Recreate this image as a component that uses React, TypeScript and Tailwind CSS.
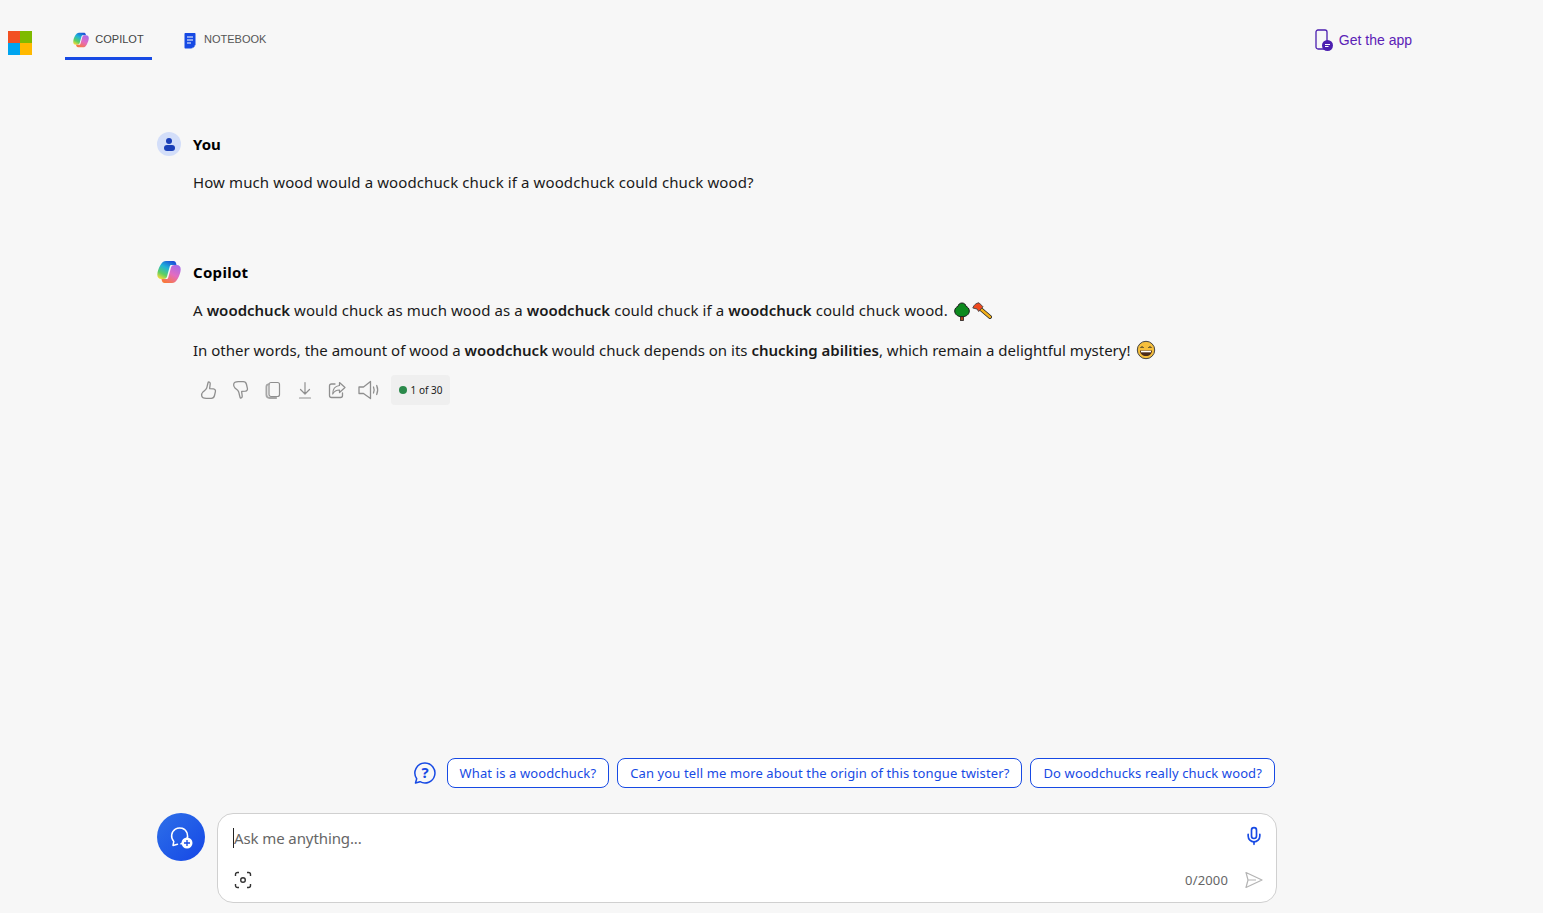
import { Mic } from "lucide-react";

const suggestions = [
  "What is a woodchuck?",
  "Can you tell me more about the origin of this tongue twister?",
  "Do woodchucks really chuck wood?",
];

function MsLogo() {
  return (
    <div className="grid grid-cols-2 gap-0 w-6 h-6">
      <div className="bg-[#f25022]" />
      <div className="bg-[#7fba00]" />
      <div className="bg-[#00a4ef]" />
      <div className="bg-[#ffb900]" />
    </div>
  );
}

function CopilotLogo({ id, size }: { id: string; size: number }) {
  return (
    <svg width={size} height={size} viewBox="0 0 24 24">
      <defs>
        <linearGradient id={`${id}a`} x1="0.75" y1="0" x2="0.2" y2="1">
          <stop offset="0" stopColor="#1b50d8" />
          <stop offset="0.4" stopColor="#1fb4d8" />
          <stop offset="0.75" stopColor="#5fcf60" />
          <stop offset="1" stopColor="#f2d93a" />
        </linearGradient>
        <linearGradient id={`${id}b`} x1="0.8" y1="0" x2="0.25" y2="1">
          <stop offset="0" stopColor="#a86be8" />
          <stop offset="0.5" stopColor="#e36cc0" />
          <stop offset="1" stopColor="#f9783a" />
        </linearGradient>
      </defs>
      <path d="M9 1h7.500c1.300 0 2.100.8 2.600 2.200l.4 1.800h-5c-.9 0-1.400.4-1.700 1.300L10 16.500c-.6 1.800-1.800 2.500-3.500 2.500H4.200C1.800 19 .2 17.300.3 14.500c.1-2.800 1.300-6.200 3-9.200C4.800 2.500 6.700 1 9 1z" fill={`url(#${id}a)`} />
      <path d="M15 23H7.500c-1.300 0-2.100-.8-2.600-2.200L4.500 19h5c.9 0 1.400-.4 1.700-1.300L14 7.500C14.600 5.700 15.800 5 17.500 5h2.300c2.400 0 4 1.700 3.900 4.500-.1 2.800-1.300 6.200-3 9.200C19.200 21.500 17.300 23 15 23z" fill={`url(#${id}b)`} />
    </svg>
  );
}

function TreeEmoji() {
  return (
    <svg width="18" height="19" viewBox="0 0 18 19" className="inline-block align-[-5px] ml-[1px]">
      <rect x="7.500" y="13" width="3" height="5.500" fill="#b0481c" stroke="#222" strokeWidth="0.8" />
      <path d="M9 1c2.300 0 3.800 1.600 3.900 3.300 1.900.7 3.400 2.300 3.400 4.700 0 3.200-2.800 5.700-7.300 5.700S1.700 12.200 1.700 9c0-2.400 1.500-4 3.400-4.700C5.200 2.600 6.700 1 9 1z" fill="#0d8a1e" stroke="#1c1c1c" strokeWidth="1" />
    </svg>
  );
}

function AxeEmoji() {
  return (
    <svg width="20" height="17" viewBox="0 0 20 17" className="inline-block align-[-3px] -ml-[3px]">
      <path d="M7.500 6l10.500 9" stroke="#222" strokeWidth="3.800" strokeLinecap="round" />
      <path d="M7.500 6l10.500 9" stroke="#f2b01a" strokeWidth="2.400" strokeLinecap="round" />
      <path d="M.8 6C1.700 3.200 4 1 7 .8l4 4-4.300 4.700L5 7z" fill="#f0491f" stroke="#444" strokeWidth="0.9" strokeLinejoin="round" />
    </svg>
  );
}

function GrinEmoji() {
  return (
    <svg width="20" height="20" viewBox="0 0 20 20" className="inline-block align-[-4px] ml-[2px]">
      <circle cx="10" cy="10" r="8.700" fill="#f6bf3c" stroke="#444" strokeWidth="1" />
      <path d="M4.500 8c.6-1.500 2.500-1.500 3.100 0M12.400 8c.6-1.500 2.500-1.500 3.100 0" fill="none" stroke="#222" strokeWidth="1" />
      <path d="M4 10.500h12c0 3.500-2.600 5.500-6 5.500s-6-2-6-5.500z" fill="#4a2a1a" />
      <path d="M5 10.800h10v1.500H5z" fill="#fff" />
    </svg>
  );
}

const grey = "#8f8f8f";

function ThumbUp({ flip }: { flip?: boolean }) {
  return (
    <svg width="20" height="20" viewBox="0 0 20 20" fill="none" className={flip ? "-scale-y-100" : ""}>
      <path d="M9.200 2.200c1-.5 2 .2 2 1.400 0 1.800-.6 3.400-.5 5l3.700.3c1.700.2 2.300 1.500 2 2.800l-.9 3.800c-.4 1.700-1.500 2.800-3.200 2.800H7.200c-2.300 0-4.200-.7-4.500-2.400-.3-1.500.2-2.900 1.300-4 1.300-1.200 3-2 3.700-3.800.5-1.300.6-3.100 1.500-5.900z" stroke={grey} strokeWidth="1.300" strokeLinejoin="round" />
    </svg>
  );
}

function CopyIcon() {
  return (
    <svg width="20" height="20" viewBox="0 0 20 20" fill="none">
      <rect x="6" y="2.500" width="10.500" height="14" rx="2" stroke={grey} strokeWidth="1.200" />
      <path d="M6 4.200c-1.500.2-2.600 1-2.600 2.600v8c0 2 1.300 3.200 3.300 3.200h6.500" stroke="#a5a5a5" strokeWidth="1.800" strokeLinecap="round" />
    </svg>
  );
}

function DownloadIcon() {
  return (
    <svg width="20" height="20" viewBox="0 0 20 20" fill="none">
      <path d="M10 2.500v11M5.500 9.500l4.500 4.500 4.500-4.500M4.500 18h11" stroke={grey} strokeWidth="1.200" strokeLinecap="round" strokeLinejoin="round" />
    </svg>
  );
}

function ShareIcon() {
  return (
    <svg width="20" height="20" viewBox="0 0 20 20" fill="none">
      <path d="M8 4H4.500C3.200 4 2.500 4.800 2.500 6v9.500c0 1.200.7 2 2 2h9c1.300 0 2-.8 2-2V13" stroke={grey} strokeWidth="1.300" strokeLinecap="round" />
      <path d="M12.500 2.500L18 7.500l-5.500 5V10C9.500 10 7 11.500 5.700 14c0-5 2.800-8 6.800-8.500z" stroke={grey} strokeWidth="1.200" strokeLinejoin="round" />
    </svg>
  );
}

function SpeakerIcon() {
  return (
    <svg width="22" height="20" viewBox="0 0 22 20" fill="none">
      <path d="M1 7v6.500h4.500l7 5V1.500l-7 5.500z" stroke={grey} strokeWidth="1.300" strokeLinejoin="round" />
      <path d="M15.500 7c.8 1.800.8 4.200 0 6M18.700 5.500c1.200 2.800 1.200 6.200 0 9" stroke={grey} strokeWidth="1.300" strokeLinecap="round" />
    </svg>
  );
}

export default function App() {
  const actionClass = "w-8 flex justify-center";
  const boldClass = "font-semibold tracking-normal";
  return (
    <div className="h-[913px] overflow-hidden bg-[#f7f7f7] flex flex-col font-['Noto_Sans',sans-serif] text-[#1a1a1a]">
      {/* top bar */}
      <header className="flex h-[60px] pl-2 pr-[131px] font-['Liberation_Sans',sans-serif]">
        <div className="pt-[31px]">
          <MsLogo />
        </div>
        <div className="ml-[33px] w-[87px] h-full border-b-[3px] border-[#174ae4] flex items-start justify-center gap-[6px] pt-[32px]">
          <CopilotLogo id="tab" size={16} />
          <span className="text-[11px] leading-[15px] text-[#444]">COPILOT</span>
        </div>
        <div className="ml-[32px] flex items-start gap-[8px] pt-[32px]">
          <svg width="12" height="17" viewBox="0 0 12 17">
            <path d="M1.500 1h9c.6 0 1 .4 1 1v10.500L7.500 16.500H1.500c-.6 0-1-.4-1-1V2c0-.6.4-1 1-1z" fill="#174ae4" />
            <path d="M3 5h6M3 8h6M3 11h4" stroke="#fff" strokeWidth="1.200" />
            <path d="M8.500 13.500h3l-3 3z" fill="#174ae4" />
          </svg>
          <span className="text-[11px] leading-[15px] text-[#555]">NOTEBOOK</span>
        </div>
        <div className="ml-auto flex items-start gap-[6px] pt-[29px] text-[#5b21b6]">
          <svg width="18" height="23" viewBox="0 0 18 23" fill="none">
            <rect x="1" y="1" width="11" height="19" rx="2" stroke="#4c1fb0" strokeWidth="1.300" />
            <circle cx="12.500" cy="16.500" r="5.500" fill="#4c1fb0" />
            <path d="M10 15.500h5M10 17.500h3.500" stroke="#fff" strokeWidth="1" />
          </svg>
          <span className="text-sm leading-[22px]">Get the app</span>
        </div>
      </header>

      {/* conversation */}
      <main className="flex-1 pl-[157px] pt-[72px]">
        <div className="flex items-center gap-3 h-6">
          <div className="w-6 h-6 rounded-full bg-[#d3def9] flex flex-col items-center justify-center">
            <div className="w-[6px] h-[6px] rounded-full bg-[#1a3fb8]" />
            <div className="w-[11px] h-[6px] rounded-[3px] bg-[#1a3fb8] mt-[1px]" />
          </div>
          <span className="text-[15px] font-bold text-black">You</span>
        </div>
        <p className="ml-9 mt-[14px] text-[15px] leading-6 tracking-[0.11px]">
          How much wood would a woodchuck chuck if a woodchuck could chuck wood?
        </p>

        <div className="flex items-center gap-3 h-6 mt-[66px]">
          <CopilotLogo id="msg" size={24} />
          <span className="text-[15px] font-bold text-black tracking-[0.3px]">Copilot</span>
        </div>
        <div className="ml-9 mt-[14px] text-[15px] leading-6">
          <p className="tracking-[0.09px]">
            A <b className={boldClass}>woodchuck</b> would chuck as much wood as a <b className={boldClass}>woodchuck</b> could chuck if a <b className={boldClass}>woodchuck</b> could chuck wood. <TreeEmoji /> <AxeEmoji />
          </p>
          <p className="mt-4">
            In other words, the amount of wood a <b className={boldClass}>woodchuck</b> would chuck depends on its <b className={boldClass}>chucking abilities</b>, which remain a delightful mystery! <GrinEmoji />
          </p>
        </div>
        <div className="ml-9 mt-[13px] flex items-center h-[30px]">
          <div className={actionClass}><ThumbUp /></div>
          <div className={actionClass}><ThumbUp flip /></div>
          <div className={actionClass}><CopyIcon /></div>
          <div className={actionClass}><DownloadIcon /></div>
          <div className={actionClass}><ShareIcon /></div>
          <div className={actionClass}><SpeakerIcon /></div>
          <div className="ml-[6px] h-[30px] w-[59px] rounded bg-[#efefef] flex items-center justify-center gap-1 text-[10px]">
            <span className="w-2 h-2 rounded-full bg-[#2b8a4b]" />
            <span>1 of 30</span>
          </div>
        </div>
      </main>

      {/* suggestions + input */}
      <footer className="pl-[157px] pr-[266px] pb-[10px]">
        <div className="flex items-center justify-end gap-2 mr-[2px]">
          <svg width="24" height="24" viewBox="0 0 24 24" fill="none" className="mr-[2px]">
            <path d="M12 2a10 10 0 1 1-5 18.700L2.500 22l1.200-4.300A10 10 0 0 1 12 2z" stroke="#174ae4" strokeWidth="1.500" strokeLinejoin="round" />
            <text x="12" y="17" textAnchor="middle" fontSize="15" fontWeight="700" fill="#174ae4">?</text>
          </svg>
          {suggestions.map((s) => (
            <div key={s} className="h-[30px] px-3 pt-px flex items-center rounded-lg border border-[#174ae4] bg-white text-[13px] tracking-[0.12px] text-[#174ae4]">
              {s}
            </div>
          ))}
        </div>
        <div className="flex gap-3 mt-[25px]">
          <div className="w-12 h-12 rounded-full bg-gradient-to-br from-[#2f6fe8] to-[#1745e6] flex items-center justify-center">
            <svg width="24" height="24" viewBox="0 0 24 24" fill="none">
              <path d="M12 18.800a8 8 0 1 0-7.200-2.400L4 20.500l4.500-1.200" stroke="#fff" strokeWidth="1.500" strokeLinejoin="round" strokeLinecap="round" />
              <circle cx="18" cy="18" r="5.500" fill="#fff" />
              <path d="M18 15v6M15 18h6" stroke="#174ae4" strokeWidth="1.300" />
            </svg>
          </div>
          <div className="flex-1 h-[90px] rounded-2xl border border-[#d0d0d0] bg-white flex flex-col justify-between pl-[15px] pr-[12px] pt-[12px] pb-[12px]">
            <div className="flex items-start justify-between">
              <div className="flex items-center h-6 text-[15px] tracking-[-0.1px] text-[#666]">
                <span className="w-px h-[20px] bg-[#222]" />
                Ask me anything...
              </div>
              <Mic className="w-5 h-5 text-[#174ae4]" strokeWidth={2} />
            </div>
            <div className="flex items-center justify-between">
              <svg width="18" height="18" viewBox="0 0 18 18" fill="none" className="ml-[1px]">
                <path d="M1.500 5V3.500a2 2 0 0 1 2-2H5M13 1.500h1.500a2 2 0 0 1 2 2V5M16.500 13v1.500a2 2 0 0 1-2 2H13M5 16.500H3.500a2 2 0 0 1-2-2V13" stroke="#333" strokeWidth="1.400" />
                <circle cx="9" cy="9" r="2.300" stroke="#333" strokeWidth="1.400" />
              </svg>
              <div className="flex items-center gap-[17px] mr-px">
                <span className="text-[13px] tracking-[0.15px] text-[#666]">0/2000</span>
                <svg width="18" height="18" viewBox="0 0 18 18" fill="none">
                  <path d="M1 1.500L17 9 1 16.500 3 9zM3 9h8" stroke="#b4b4b4" strokeWidth="1.200" strokeLinejoin="round" />
                </svg>
              </div>
            </div>
          </div>
        </div>
      </footer>
    </div>
  );
}
